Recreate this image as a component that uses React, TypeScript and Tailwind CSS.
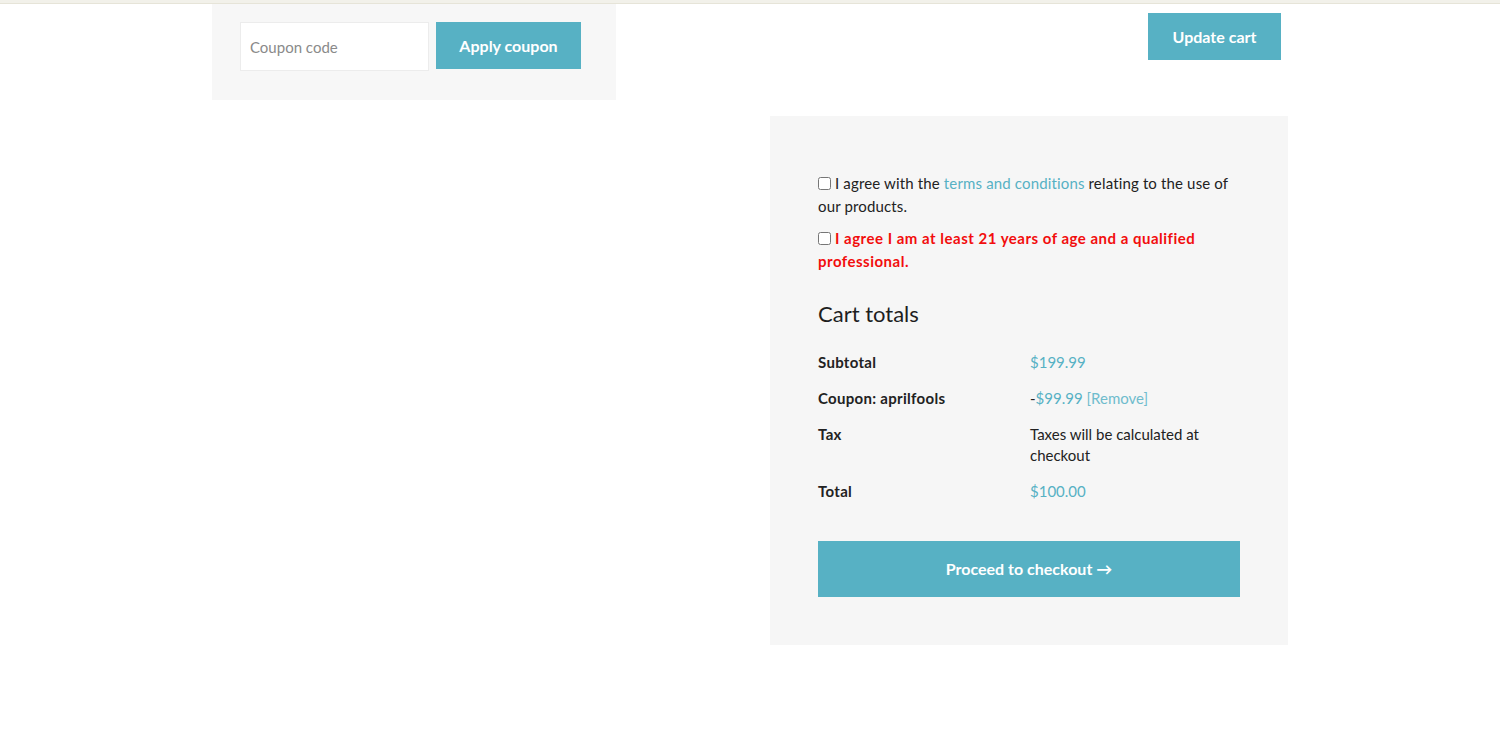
import React from 'react';

const teal = 'bg-[#57b1c4]';

const CartPage: React.FC = () => {
    const rows = [
        { label: 'Subtotal', value: <span className="text-[#57b1c4]">$199.99</span> },
        {
            label: 'Coupon: aprilfools',
            value: (
                <span>
                    -<span className="text-[#57b1c4]">$99.99</span>{' '}
                    <a href="#" className="text-[#6fbccd]">[Remove]</a>
                </span>
            ),
        },
        { label: 'Tax', value: <span className="text-[#222]">Taxes will be calculated at checkout</span> },
        { label: 'Total', value: <span className="text-[#57b1c4]">$100.00</span> },
    ];

    return (
        <div className="min-h-screen bg-white font-['Lato',sans-serif] text-[#222]">
            {/* top strip */}
            <div className="h-[4px] bg-[#f2f1ea] border-b border-[#e6e4d8]" />

            <div className="mx-auto w-[1076px]">
                {/* Coupon + update row */}
                <div className="flex items-start justify-between">
                    <div className="w-[404px] h-[96px] bg-[#f7f7f7] pl-[28px] pt-[18px] flex items-start gap-[7px]">
                        <input
                            type="text"
                            placeholder="Coupon code"
                            className="w-[189px] h-[49px] bg-white border border-[#ececec] px-[9px] text-[15px] placeholder:text-[#8a8a8a] outline-none"
                        />
                        <button className={`${teal} w-[145px] h-[47px] text-white font-bold text-[16px]`}>
                            Apply coupon
                        </button>
                    </div>
                    <button className={`${teal} mt-[9px] mr-[7px] w-[133px] h-[47px] text-white font-bold text-[16px]`}>
                        Update cart
                    </button>
                </div>

                {/* Cart totals box */}
                <div className="flex justify-end mt-[16px]">
                    <div className="w-[518px] bg-[#f6f6f6] px-[48px] pt-[56px] pb-[48px]">
                        <p className="text-[15px] leading-[23px] tracking-[0.15px]">
                            <input type="checkbox" className="mr-[4px] align-[-1px]" />
                            I agree with the <a href="#" className="text-[#57b1c4]">terms and conditions</a> relating to the use of our products.
                        </p>
                        <p className="mt-[9px] text-[15px] leading-[23px] font-bold tracking-[0.5px] text-[#f20d0d]">
                            <input type="checkbox" className="mr-[4px] align-[-1px]" />
                            I agree I am at least 21 years of age and a qualified professional.
                        </p>

                        <h2 className="mt-[26px] text-[22px] leading-[30px] text-[#1e1e1e]">Cart totals</h2>

                        <table className="mt-[15px] w-full text-[15px] leading-[21px]">
                            <tbody>
                                {rows.map((r) => (
                                    <tr key={r.label} className="align-top">
                                        <th className="w-[212px] py-[7.5px] text-left font-bold tracking-[0.3px]">{r.label}</th>
                                        <td className="py-[7.5px] pr-[20px]">{r.value}</td>
                                    </tr>
                                ))}
                            </tbody>
                        </table>

                        <button className={`${teal} mt-[32px] w-full h-[56px] text-white font-bold text-[16px]`}>
                            Proceed to checkout →
                        </button>
                    </div>
                </div>
            </div>
        </div>
    );
};

export default function App() {
    return <CartPage />;
}
